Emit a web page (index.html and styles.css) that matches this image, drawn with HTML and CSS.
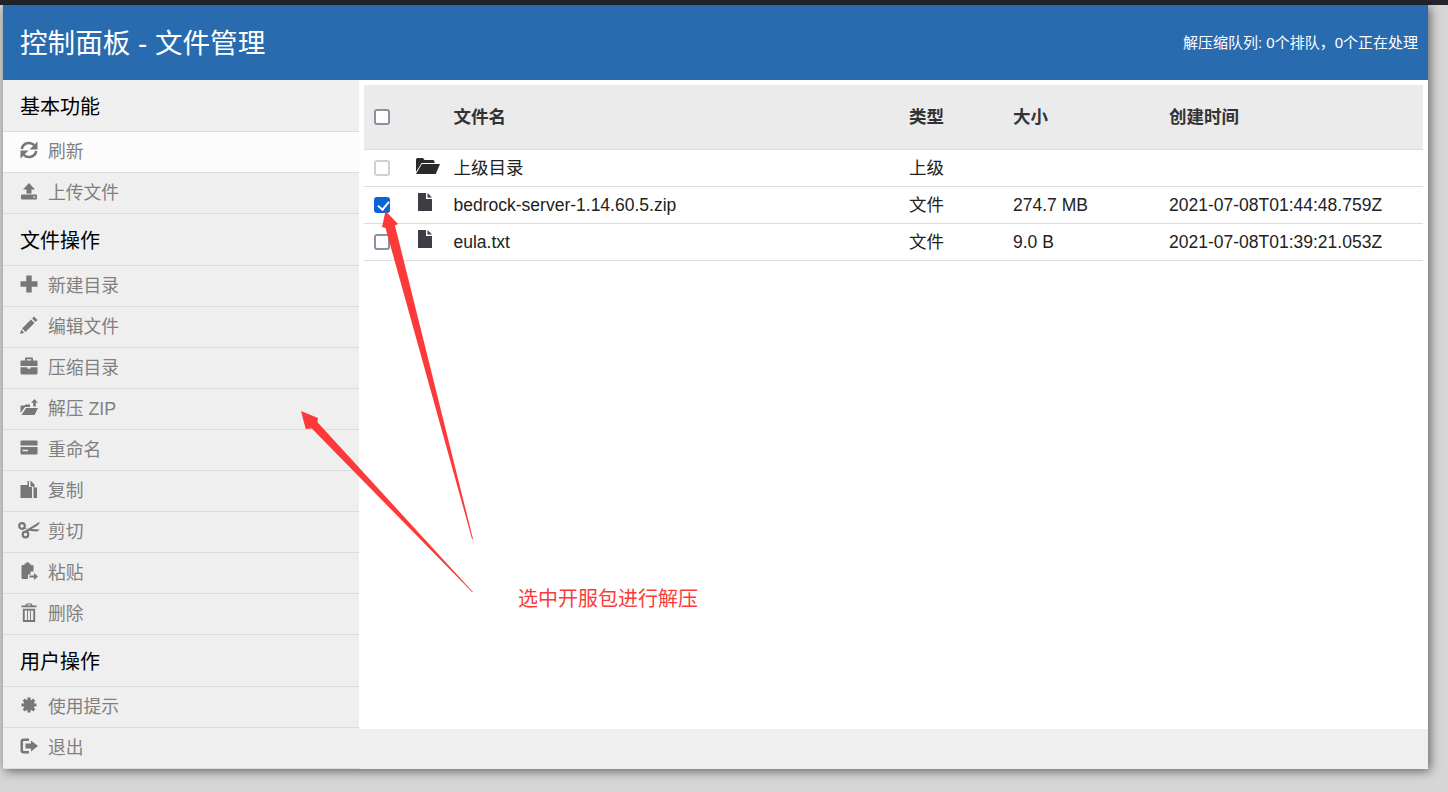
FILE: index.html
```html
<!DOCTYPE html>
<html lang="zh">
<head>
<meta charset="utf-8">
<title>控制面板 - 文件管理</title>
<link rel="stylesheet" href="styles.css">
</head>
<body>
<div class="topstrip"></div>
<div class="window">
  <header class="header">
    <h1 class="title">控制面板 - 文件管理</h1>
    <div class="queue">解压缩队列: 0个排队，0个正在处理</div>
  </header>
  <div class="body">
    <aside class="side">
      <div class="group">基本功能</div>
      <a class="item active"><svg class="ic" viewBox="0 0 18 18"><path class="s" d="M1.800 8A7.300 7.300 0 0 1 14.200 4.200"/><path d="M17.500 .5v8h-8z"/><path class="s" d="M16.200 10A7.300 7.300 0 0 1 3.800 13.800"/><path d="M.5 17.500v-8h8z"/></svg>刷新</a>
      <a class="item"><svg class="ic" viewBox="0 0 18 18"><path d="M9 1l6 6.500h-3.500V11.500h-5V7.500H3zM2 12.500h14a1 1 0 0 1 1 1V16.500a1 1 0 0 1-1 1H2a1 1 0 0 1-1-1V13.500a1 1 0 0 1 1-1zM13.300 14.500v1.200h2v-1.200z" fill-rule="evenodd"/></svg>上传文件</a>
      <div class="group">文件操作</div>
      <a class="item"><svg class="ic" viewBox="0 0 18 18"><path d="M6.300 .5h5.400v5.800h5.800v5.400h-5.800v5.800h-5.400v-5.800H.5V6.300h5.800z"/></svg>新建目录</a>
      <a class="item"><svg class="ic" viewBox="0 0 18 18"><path d="M14 .5l3.500 3.500-1.900 1.900-3.500-3.500zM11 3.500l3.500 3.500-9 9-3.500-3.500zM1.300 13.700l3 3-4.300 1.300z"/></svg>编辑文件</a>
      <a class="item"><svg class="ic" viewBox="0 0 18 18"><path d="M6 .5h6a1 1 0 0 1 1 1V3.500h3.500a1 1 0 0 1 1 1V9H.5V4.500a1 1 0 0 1 1-1H5V1.500a1 1 0 0 1 1-1zM6.800 2.200v1.300h4.400V2.200zM.5 10.300h7v1.500h3v-1.500h7V16a1.500 1.500 0 0 1-1.500 1.500H2A1.500 1.500 0 0 1 .5 16z" fill-rule="evenodd"/></svg>压缩目录</a>
      <a class="item"><svg class="ic" viewBox="0 0 18 18"><path d="M.5 15V8.500a1 1 0 0 1 1-1h3L5.500 6.500h4.500V9H5L.5 15zM1.500 17l4.500-7h12l-3.500 7zM14.500 1l3.300 3.800h-2v3.700h-2.600V4.800h-2z"/></svg>解压 ZIP</a>
      <a class="item"><svg class="ic" viewBox="0 0 18 18"><path d="M1.500 1.500h15a1 1 0 0 1 1 1V14.500a1 1 0 0 1-1 1h-15a1 1 0 0 1-1-1V2.500a1 1 0 0 1 1-1zM.5 6.500V8h17V6.500zM2.500 10.800v1.400H8v-1.400z" fill-rule="evenodd"/></svg>重命名</a>
      <a class="item"><svg class="ic" viewBox="0 0 18 18"><path d="M.5 5h7V1h1.500v6l3 0V18H.5zM10.500 .5l4 4v3h2.500V18h-3.500V6.500h-3z"/></svg>复制</a>
      <a class="item"><svg class="ic wide" viewBox="0 0 22 18"><circle class="s" cx="4" cy="5" r="2.800"/><circle class="s" cx="7.500" cy="13.500" r="2.800"/><path d="M5.800 6.500l4 1.500L21.500 .8c.2 2-.8 3.300-3 4.500L13.500 8l8 .5c-.6 1.500-2 2-4 2l-6.500-.8-2.500 2-1.300-1.700 2-1.700-3.300-1z"/></svg>剪切</a>
      <a class="item"><svg class="ic" viewBox="0 0 18 18"><path d="M2.500 3h2V1.500h1.500a1.500 1.500 0 0 1 3 0h1.500V3h2a1 1 0 0 1 1 1V9.500h-3v3H8V17H2.500a1 1 0 0 1-1-1V4a1 1 0 0 1 1-1zM9.500 13.500h4.500v-2.500l4 3.500-4 3.500v-2.500H9.500z"/></svg>粘贴</a>
      <a class="item"><svg class="ic tall" viewBox="0 0 18 20"><path d="M6.500 .5h5L13 2.500h4V4.500H1V2.500h4zM7.500 1.700L7 2.500h4l-.5-.8zM2.500 6h13v14h-13zM4.500 8v10h2.500V8zM8 8v10h2V8zM11 8v10h2.500V8z" fill-rule="evenodd"/></svg>删除</a>
      <div class="group">用户操作</div>
      <a class="item"><svg class="ic" viewBox="0 0 18 18"><circle cx="9" cy="9" r="5.500"/><path class="b" d="M9 1.500v15M1.500 9h15M3.700 3.700l10.600 10.600M14.300 3.700L3.700 14.300"/></svg>使用提示</a>
      <a class="item"><svg class="ic" viewBox="0 0 18 18"><path d="M3.500 1.500H9v2.500H4a1 1 0 0 0-1 1v8a1 1 0 0 0 1 1h5v2.500H3.500A3 3 0 0 1 .5 13.500v-9a3 3 0 0 1 3-3zM11 3.500L18 9l-7 5.500V11.500H5.500v-5H11z"/></svg>退出</a>
    </aside>
    <main class="main">
      <div class="panel">
        <table class="files">
          <thead>
            <tr>
              <th class="c-check"><input type="checkbox"></th>
              <th class="c-icon"></th>
              <th class="c-name">文件名</th>
              <th class="c-type">类型</th>
              <th class="c-size">大小</th>
              <th>创建时间</th>
            </tr>
          </thead>
          <tbody>
            <tr>
              <td class="c-check"><input type="checkbox" disabled></td>
              <td class="c-icon"><svg class="fi folder" viewBox="0 0 24 18"><path d="M0 15V2.500A1.500 1.500 0 0 1 1.500 1H7l1.500 2H17a1.500 1.500 0 0 1 1.500 1.500V6H5.500z"/><path d="M5.800 7H24l-4.200 10H0z"/></svg></td>
              <td>上级目录</td>
              <td>上级</td>
              <td></td>
              <td></td>
            </tr>
            <tr>
              <td class="c-check"><input type="checkbox" checked></td>
              <td class="c-icon"><svg class="fi" viewBox="0 0 14 18"><path d="M0 0h8v6h6v12H0zM9.500 0L14 4.500H9.500z"/></svg></td>
              <td>bedrock-server-1.14.60.5.zip</td>
              <td>文件</td>
              <td>274.7 MB</td>
              <td>2021-07-08T01:44:48.759Z</td>
            </tr>
            <tr>
              <td class="c-check"><input type="checkbox"></td>
              <td class="c-icon"><svg class="fi" viewBox="0 0 14 18"><path d="M0 0h8v6h6v12H0zM9.500 0L14 4.500H9.500z"/></svg></td>
              <td>eula.txt</td>
              <td>文件</td>
              <td>9.0 B</td>
              <td>2021-07-08T01:39:21.053Z</td>
            </tr>
          </tbody>
        </table>
      </div>
      <div class="foot"></div>
    </main>
  </div>
</div>
<svg class="marks" viewBox="0 0 1448 792"><path d="M385.500 211L398 224l-3 1.500L473 539 472 539 385.500 228 382 227z"/><path d="M301 411l17 7-.500 4.300L473 592 472 592 311.800 428.500 305.700 429z"/></svg>
<div class="note">选中开服包进行解压</div>
</body>
</html>
```
FILE: styles.css
```css
* { box-sizing: border-box; }
html, body { margin: 0; height: 100%; }
body {
  background: #d6d6d6;
  font-family: "Liberation Sans", "Noto Sans CJK SC", sans-serif;
  height: 792px;
  overflow: hidden;
  position: relative;
  padding-left: 3px;
}
.topstrip { height: 5px; margin-left: -3px; background: #25252e; }
.window {
  width: 1425px;
  height: 764px;
  display: flex;
  flex-direction: column;
  box-shadow: 2px 2px 10px rgba(0,0,0,.55);
  background: #fff;
}
.header {
  height: 75px;
  flex: none;
  background: #286baf;
  color: #fff;
  display: flex;
  align-items: center;
  justify-content: space-between;
  padding: 0 10px 0 17px;
}
.title { margin: 2px 0 0; font-size: 27.6px; font-weight: 400; line-height: 32px; }
.queue { font-size: 15px; line-height: 20px; margin-top: 1px; }
.body { flex: 1; display: flex; min-height: 0; }
.side {
  width: 356px;
  flex: none;
  background: #efefef;
  display: flex;
  flex-direction: column;
}
.group {
  height: 52px;
  flex: none;
  padding: 2px 17px 0;
  display: flex;
  align-items: center;
  font-size: 20px;
  line-height: 24px;
  color: #000;
  border-bottom: 1px solid #dcdcdc;
}
.item {
  height: 41px;
  flex: none;
  display: flex;
  align-items: center;
  padding-left: 17px;
  font-size: 17.8px;
  line-height: 20px;
  color: #808080;
  border-bottom: 1px solid #dcdcdc;
}
.item.active { background: #fcfcfc; }
.ic { width: 18px; height: 18px; margin-right: 10px; fill: #777; flex: none; position: relative; top: -2px; }
.ic.wide { width: 22px; margin-left: -2px; margin-right: 8px; }
.ic.tall { height: 19px; }
.ic .s { fill: none; stroke: #777; stroke-width: 2.600; }
.ic circle.s { stroke-width: 2.200; }
.ic .b { fill: none; stroke: #777; stroke-width: 3.200; }
.main { flex: 1; display: flex; flex-direction: column; min-width: 0; }
.panel { flex: 1; padding: 5px 5px 0; background: #fff; }
.foot { height: 40px; flex: none; background: #efefef; }
.files { width: 100%; border-collapse: collapse; table-layout: fixed; color: #222; font-size: 17.5px; line-height: 20px; }
.files th {
  height: 64px;
  background: #ebebeb;
  border-bottom: 1px solid #dcdcdc;
  text-align: left;
  font-weight: 700;
  padding: 0;
  color: #333;
}
.files td {
  height: 37px;
  border-bottom: 1px solid #dcdcdc;
  padding: 0;
  color: #222;
}
.c-check { width: 51px; }
.c-check input {
  appearance: none;
  width: 16px; height: 16px; margin: 0 0 0 10px; display: block;
  border: 2px solid #8f8f9d;
  border-radius: 3px;
  background: #fff;
  position: relative;
}
.c-check input:disabled { border-color: #cfcfd6; }
.c-check input:checked { background: #0b63d8; border-color: #0b63d8; }
.c-check input:checked::before {
  content: "";
  position: absolute;
  left: 3.500px;
  top: 0;
  width: 5px;
  height: 9px;
  border: solid #fff;
  border-width: 0 2px 2px 0;
  transform: rotate(40deg);
}
.c-icon { width: 38.500px; }
.c-name { width: 455.500px; }
.c-type { width: 104px; }
.c-size { width: 156px; }
.fi { display: block; width: 14px; height: 18px; fill: #3d3d45; margin: -5px 0 0 3px; }
.fi.folder { width: 24px; height: 18px; fill: #2a2a2a; margin: -3px 0 0 1px; }
.marks { position: absolute; left: 0; top: 0; width: 1448px; height: 792px; fill: #fd3a3a; pointer-events: none; }
.note { position: absolute; left: 518px; top: 588px; font-size: 20px; line-height: 22px; color: #fd3a3a; }
```
